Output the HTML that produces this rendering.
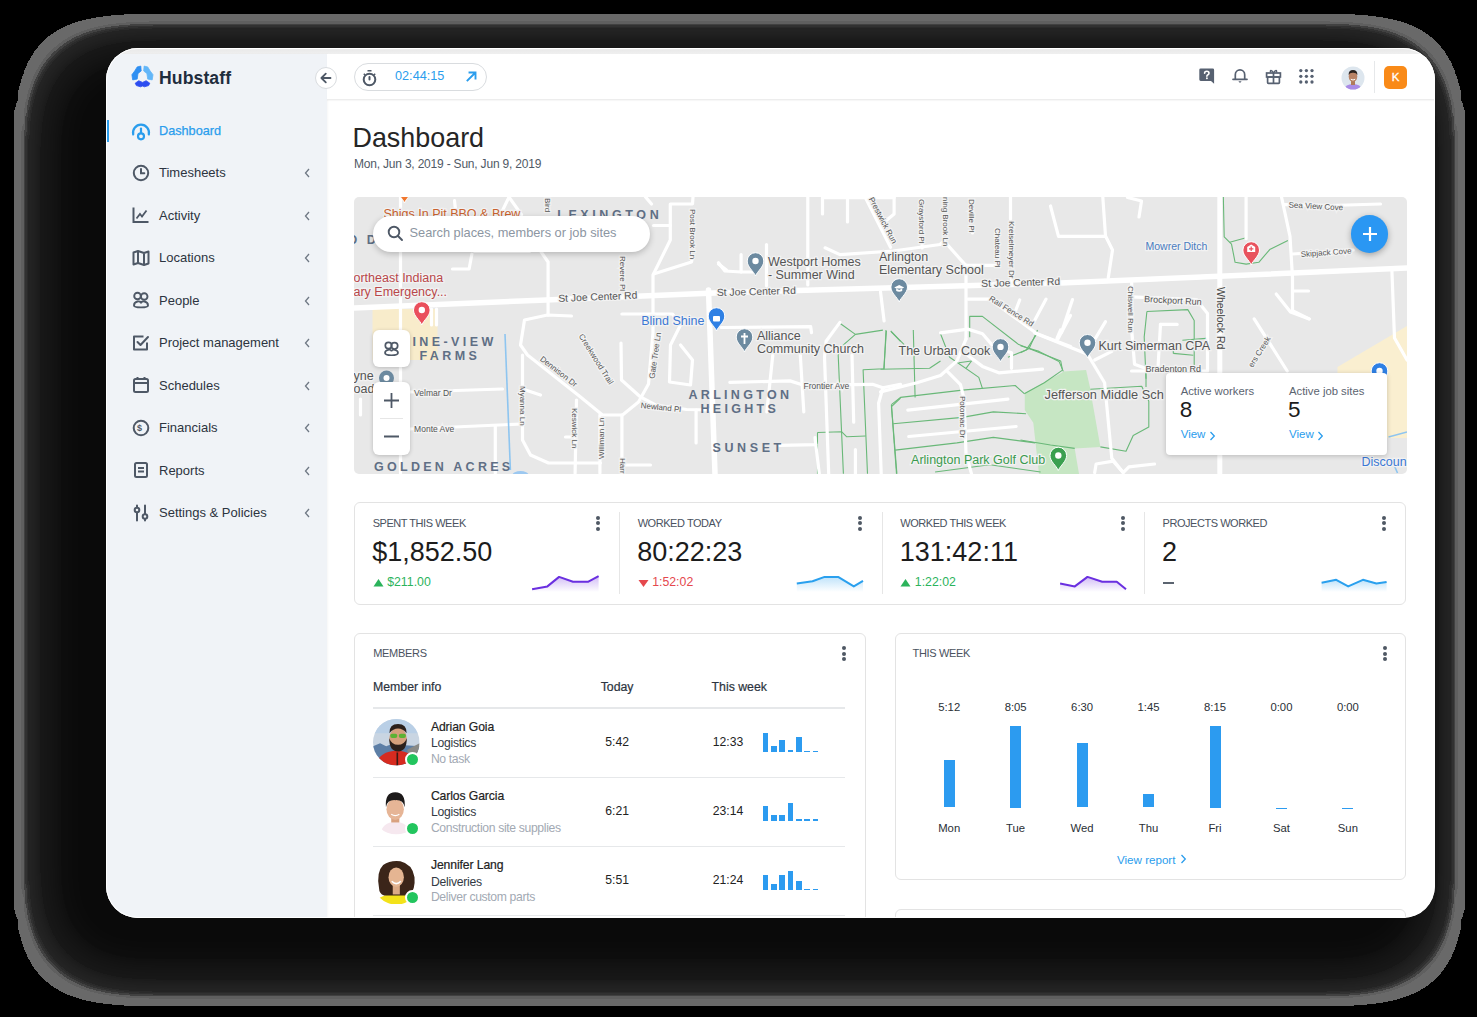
<!DOCTYPE html>
<html><head><meta charset="utf-8">
<style>
*{box-sizing:border-box;margin:0;padding:0}
html,body{width:1477px;height:1017px;overflow:hidden;background:#000}
body{font-family:"Liberation Sans",sans-serif;position:relative;color:#222}
.a{position:absolute}
.t{position:absolute;white-space:nowrap;line-height:1}
#win{position:absolute;left:106px;top:48px;width:1329px;height:870px;border-radius:32px;overflow:hidden;background:#fff}
#abs{position:absolute;left:-106px;top:-48px;width:1477px;height:1017px}
#topstrip{position:absolute;left:106px;top:48px;width:1329px;height:6px;background:linear-gradient(#e8e8e8,#efefef)}
#side{position:absolute;left:106px;top:54px;width:221px;height:864px;background:#f0f3f7;box-shadow:1px 0 2px rgba(0,0,0,.035)}
#hdr{position:absolute;left:327px;top:54px;width:1108px;height:46px;background:#fff;border-bottom:1px solid #ededed;box-shadow:0 1px 1px rgba(0,0,0,.03)}
.mi{position:absolute;left:159px;font-size:13px;color:#2c3440;white-space:nowrap;line-height:1}
.chev{position:absolute;left:303px;width:8px;height:10px}
.ic{position:absolute;left:131px;width:20px;height:20px}
.card{position:absolute;background:#fff;border:1px solid #e3e3e3;border-radius:6px}
.lbl{position:absolute;font-size:11px;color:#4a5260;white-space:nowrap;line-height:1;letter-spacing:0}
.big{position:absolute;font-size:27px;color:#1c1c1c;white-space:nowrap;line-height:1}
.keb{position:absolute;width:4px;height:15px}
.keb i{position:absolute;left:0;width:4px;height:4px;border-radius:2px;background:#4f5864}
</style></head>
<body>
<svg width="0" height="0" style="position:absolute"><defs>
<clipPath id="avc"><circle cx="23" cy="23" r="23"/></clipPath>
<symbol id="av-adrian" viewBox="0 0 46 46"><g clip-path="url(#avc)">
 <rect width="46" height="46" fill="#c9d5e2"/><rect y="0" width="46" height="14" fill="#b9cfe6"/>
 <path d="M0 27 L7 24 L13 27 L18 25 L46 27 V46 H0Z" fill="#5d7fa6"/><path d="M34 30 L46 24 V46 H34Z" fill="#8a8a86"/>
 <path d="M3 46 Q5 32 24 31 Q40 32 43 46Z" fill="#d62b20"/><path d="M24 33 V46" stroke="#3a1a14" stroke-width="1.6"/>
 <ellipse cx="24.7" cy="19" rx="8.6" ry="10.5" fill="#d4a07c"/>
 <path d="M16 19 Q16 32 24.7 32 Q33.4 32 33.4 19 Q31 25.5 24.7 25.5 Q18.4 25.5 16 19Z" fill="#2b201b"/>
 <path d="M16.2 14 Q16 5 24.7 5 Q33.4 5 33.2 14 Q29.5 9.5 24.7 9.5 Q19.9 9.5 16.2 14Z" fill="#2b201b"/>
 <rect x="17" y="14.5" width="7" height="4.3" rx="2" fill="#5bb234"/><rect x="25.5" y="14.5" width="7" height="4.3" rx="2" fill="#5bb234"/>
</g></symbol>
<symbol id="av-carlos" viewBox="0 0 46 46"><g clip-path="url(#avc)">
 <rect width="46" height="46" fill="#fff"/>
 <path d="M7 46 Q9 34 22 33 Q35 34 37 46Z" fill="#f6e8ef"/>
 <rect x="18" y="27" width="8" height="7" fill="#d9a17f"/>
 <ellipse cx="21.9" cy="21" rx="8.6" ry="10.6" fill="#e6b596"/>
 <path d="M12.8 19 Q11.5 4.3 22 4.3 Q32.5 4.3 31.2 19 Q30 11.5 22 12 Q14 11.5 12.8 19Z" fill="#1d1a1a"/>
 <path d="M18 26 Q22 28.5 26 26" stroke="#fff" stroke-width="1.2" fill="none"/>
</g></symbol>
<symbol id="av-jen" viewBox="0 0 46 46"><g clip-path="url(#avc)">
 <rect width="46" height="46" fill="#fff"/>
 <path d="M2 46 Q4 36 23 35 Q40 36 43 46Z" fill="#f3e21a"/>
 <path d="M6 30 Q3 14 10 7 Q17 2 27 3.2 Q39 6 41 19 Q42 31 36 37 L11 37 Q6 35 6 30Z" fill="#3b2519"/>
 <rect x="19.5" y="26" width="7" height="10" fill="#dcaa86"/>
 <ellipse cx="22.9" cy="19" rx="7.6" ry="9.6" fill="#e5b592"/>
 <path d="M18.5 23 Q23 27.5 27.5 23" stroke="#fff" stroke-width="1.6" fill="none"/>
</g></symbol>
</defs></svg>
<svg id="shadow" width="1477" height="1017" style="position:absolute;left:0;top:0">
<defs><filter id="shf" filterUnits="userSpaceOnUse" x="0" y="0" width="1477" height="1017" color-interpolation-filters="sRGB">
<feGaussianBlur stdDeviation="25.6"/>
<feColorMatrix type="matrix" values="0 0 0 1 0  0 0 0 1 0  0 0 0 1 0  0 0 0 0 1"/>
<feComponentTransfer><feFuncR type="discrete" tableValues="0 0.412 0.412 0.373 0.255 0.196 0.165 0.141 0.138 0.136 0.133 0.13 0.128 0.125 0.122 0.119 0.117 0.114 0.111 0.109 0.106 0.094 0.094 0.093 0.092 0.092 0.091 0.09 0.09 0.089 0.089 0.088 0.087 0.087 0.086 0.086 0.085 0.084 0.084 0.083 0.082 0.082 0.081 0.081 0.08 0.079 0.079 0.078 0.078 0.077 0.076 0.076 0.075 0.074 0.074 0.073 0.073 0.072 0.071 0.071 0.07 0.07 0.069 0.068 0.068 0.067 0.066 0.066 0.065 0.065 0.064 0.063 0.063 0.055 0.055 0.055 0.054 0.054 0.054 0.054 0.054 0.053 0.053 0.053 0.053 0.053 0.053 0.052 0.052 0.052 0.052 0.052 0.052 0.051 0.051 0.051 0.051 0.051 0.051 0.05 0.05 0.05 0.05 0.05 0.049 0.049 0.049 0.049 0.049 0.049 0.048 0.048 0.048 0.048 0.048 0.048 0.047 0.047 0.047 0.047 0.047 0.046 0.046 0.046 0.046 0.046 0.046 0.045 0.045 0.045 0.045 0.045 0.045 0.044 0.044 0.044 0.044 0.044 0.043 0.043 0.043 0.043 0.043 0.043 0.043 0.043 0.043 0.043 0.043 0.043 0.043 0.043 0.043 0.043 0.043 0.043 0.043 0.043 0.043 0.043 0.043 0.043 0.043 0.043 0.043 0.043 0.043 0.043 0.043 0.043 0.043 0.043 0.043 0.043 0.043 0.043 0.043 0.043 0.043 0.043 0.043 0.043 0.043 0.043 0.043 0.043 0.043 0.043 0.043 0.043 0.043 0.043 0.043 0.043 0.043 0.043 0.043 0.043 0.043 0.043 0.043 0.043 0.043 0.043 0.043 0.043 0.043 0.043 0.043 0.043 0.043 0.043 0.043 0.043 0.043 0.043 0.043 0.043 0.043 0.043 0.043 0.043 0.043 0.043 0.043 0.043 0.043 0.043 0.043 0.043 0.043 0.043 0.043 0.043 0.043 0.043 0.043 0.043 0.043 0.043 0.043 0.043 0.043 0.043 0.043 0.043 0.043 0.043 0.043 0.043 0.043 0.043 0.043 0.043 0.043 0.043"/><feFuncG type="discrete" tableValues="0 0.412 0.412 0.373 0.255 0.196 0.165 0.141 0.138 0.136 0.133 0.13 0.128 0.125 0.122 0.119 0.117 0.114 0.111 0.109 0.106 0.094 0.094 0.093 0.092 0.092 0.091 0.09 0.09 0.089 0.089 0.088 0.087 0.087 0.086 0.086 0.085 0.084 0.084 0.083 0.082 0.082 0.081 0.081 0.08 0.079 0.079 0.078 0.078 0.077 0.076 0.076 0.075 0.074 0.074 0.073 0.073 0.072 0.071 0.071 0.07 0.07 0.069 0.068 0.068 0.067 0.066 0.066 0.065 0.065 0.064 0.063 0.063 0.055 0.055 0.055 0.054 0.054 0.054 0.054 0.054 0.053 0.053 0.053 0.053 0.053 0.053 0.052 0.052 0.052 0.052 0.052 0.052 0.051 0.051 0.051 0.051 0.051 0.051 0.05 0.05 0.05 0.05 0.05 0.049 0.049 0.049 0.049 0.049 0.049 0.048 0.048 0.048 0.048 0.048 0.048 0.047 0.047 0.047 0.047 0.047 0.046 0.046 0.046 0.046 0.046 0.046 0.045 0.045 0.045 0.045 0.045 0.045 0.044 0.044 0.044 0.044 0.044 0.043 0.043 0.043 0.043 0.043 0.043 0.043 0.043 0.043 0.043 0.043 0.043 0.043 0.043 0.043 0.043 0.043 0.043 0.043 0.043 0.043 0.043 0.043 0.043 0.043 0.043 0.043 0.043 0.043 0.043 0.043 0.043 0.043 0.043 0.043 0.043 0.043 0.043 0.043 0.043 0.043 0.043 0.043 0.043 0.043 0.043 0.043 0.043 0.043 0.043 0.043 0.043 0.043 0.043 0.043 0.043 0.043 0.043 0.043 0.043 0.043 0.043 0.043 0.043 0.043 0.043 0.043 0.043 0.043 0.043 0.043 0.043 0.043 0.043 0.043 0.043 0.043 0.043 0.043 0.043 0.043 0.043 0.043 0.043 0.043 0.043 0.043 0.043 0.043 0.043 0.043 0.043 0.043 0.043 0.043 0.043 0.043 0.043 0.043 0.043 0.043 0.043 0.043 0.043 0.043 0.043 0.043 0.043 0.043 0.043 0.043 0.043 0.043 0.043 0.043 0.043 0.043 0.043"/><feFuncB type="discrete" tableValues="0 0.412 0.412 0.373 0.255 0.196 0.165 0.141 0.138 0.136 0.133 0.13 0.128 0.125 0.122 0.119 0.117 0.114 0.111 0.109 0.106 0.094 0.094 0.093 0.092 0.092 0.091 0.09 0.09 0.089 0.089 0.088 0.087 0.087 0.086 0.086 0.085 0.084 0.084 0.083 0.082 0.082 0.081 0.081 0.08 0.079 0.079 0.078 0.078 0.077 0.076 0.076 0.075 0.074 0.074 0.073 0.073 0.072 0.071 0.071 0.07 0.07 0.069 0.068 0.068 0.067 0.066 0.066 0.065 0.065 0.064 0.063 0.063 0.055 0.055 0.055 0.054 0.054 0.054 0.054 0.054 0.053 0.053 0.053 0.053 0.053 0.053 0.052 0.052 0.052 0.052 0.052 0.052 0.051 0.051 0.051 0.051 0.051 0.051 0.05 0.05 0.05 0.05 0.05 0.049 0.049 0.049 0.049 0.049 0.049 0.048 0.048 0.048 0.048 0.048 0.048 0.047 0.047 0.047 0.047 0.047 0.046 0.046 0.046 0.046 0.046 0.046 0.045 0.045 0.045 0.045 0.045 0.045 0.044 0.044 0.044 0.044 0.044 0.043 0.043 0.043 0.043 0.043 0.043 0.043 0.043 0.043 0.043 0.043 0.043 0.043 0.043 0.043 0.043 0.043 0.043 0.043 0.043 0.043 0.043 0.043 0.043 0.043 0.043 0.043 0.043 0.043 0.043 0.043 0.043 0.043 0.043 0.043 0.043 0.043 0.043 0.043 0.043 0.043 0.043 0.043 0.043 0.043 0.043 0.043 0.043 0.043 0.043 0.043 0.043 0.043 0.043 0.043 0.043 0.043 0.043 0.043 0.043 0.043 0.043 0.043 0.043 0.043 0.043 0.043 0.043 0.043 0.043 0.043 0.043 0.043 0.043 0.043 0.043 0.043 0.043 0.043 0.043 0.043 0.043 0.043 0.043 0.043 0.043 0.043 0.043 0.043 0.043 0.043 0.043 0.043 0.043 0.043 0.043 0.043 0.043 0.043 0.043 0.043 0.043 0.043 0.043 0.043 0.043 0.043 0.043 0.043 0.043 0.043 0.043 0.043 0.043 0.043 0.043 0.043 0.043"/></feComponentTransfer>
</filter></defs>
<rect x="75" y="75" width="1329" height="870" rx="44" fill="#fff" filter="url(#shf)"/>
</svg>
<div id="win"><div id="abs">
  <div id="topstrip"></div>
  <div id="side"></div>

  <!-- logo -->
  <svg class="a" style="left:131px;top:65px" width="23" height="23" viewBox="0 0 23 23" stroke-linejoin="round" stroke-width="0.8">
    <path d="M6.2 1.9 L9.8 1.1 L10.2 6.0 L7.0 8.4 L6.2 14.1 L1.7 14.9 L0.9 9.7 L3.7 6.0Z" fill="#2f8ff2" stroke="#2f8ff2"/>
    <path d="M16.7 1.9 L13.1 1.1 L12.7 6.0 L15.9 8.4 L16.7 14.1 L21.2 14.9 L22.0 9.7 L19.2 6.0Z" fill="#62b6f8" stroke="#62b6f8"/>
    <path d="M4.2 18.2 L7.8 15.7 L11.5 17.4 L15.1 15.7 L18.8 18.2 L17.6 20.6 L13.5 21.8 L11.5 21.0 L9.5 21.8 L5.4 20.6Z" fill="#2c4df0" stroke="#2c4df0"/>
  </svg>
  <div class="t" style="left:159px;top:69.5px;font-size:17.6px;font-weight:bold;color:#1f2d3d;letter-spacing:0.1px">Hubstaff</div>
  <!-- active bar -->
  <div class="a" style="left:106px;top:120px;width:2.5px;height:22px;background:#2a9ded"></div>
  <!-- icons -->
  <svg class="a" style="left:130px;top:120px" width="22" height="22" viewBox="0 0 22 22" fill="none" stroke="#2a9ded" stroke-width="2.2" stroke-linecap="round">
    <path d="M3.2 14.5 A8 8 0 1 1 18.8 14.5"/><line x1="11" y1="8.5" x2="11" y2="13"/><circle cx="11" cy="16.3" r="3"/>
  </svg>
  <div class="mi" style="top:125px;color:#2a9ded;font-size:12.7px;-webkit-text-stroke:0.25px #2a9ded">Dashboard</div>

  <svg class="a" style="left:131px;top:163px" width="20" height="20" viewBox="0 0 20 20" fill="none" stroke="#4e5866" stroke-width="2">
    <circle cx="10" cy="10" r="7.2"/><path d="M10 6 V10.3 H13.3" stroke-linecap="round"/>
  </svg>
  <div class="mi" style="top:166px">Timesheets</div>

  <svg class="a" style="left:131px;top:205px" width="20" height="20" viewBox="0 0 20 20" fill="none" stroke="#4e5866" stroke-width="2">
    <path d="M2.5 2.5 V17 H17.5"/><path d="M5.5 13.5 L9 9 L11 11.5 L15.5 5.5" stroke-width="1.8"/>
  </svg>
  <div class="mi" style="top:208.5px">Activity</div>

  <svg class="a" style="left:131px;top:248px" width="20" height="20" viewBox="0 0 20 20" fill="none" stroke="#4e5866" stroke-width="2" stroke-linejoin="round">
    <path d="M2.5 4.5 L7 3 L13 5 L17.5 3.5 V15.5 L13 17 L7 15 L2.5 16.5 Z M7 3 V15 M13 5 V17"/>
  </svg>
  <div class="mi" style="top:251px">Locations</div>

  <svg class="a" style="left:131px;top:290px" width="20" height="20" viewBox="0 0 20 20" fill="none" stroke="#4e5866" stroke-width="1.9">
    <circle cx="6.5" cy="6" r="3.3"/><circle cx="13.2" cy="6.5" r="3.3"/><path d="M3 15.5 C3 11 10 10 10 13.5 C10 10 17 11 17 15.5 C17 18 3 18 3 15.5 Z"/>
  </svg>
  <div class="mi" style="top:293.5px">People</div>

  <svg class="a" style="left:131px;top:333px" width="20" height="20" viewBox="0 0 20 20" fill="none" stroke="#4e5866" stroke-width="2" stroke-linejoin="round">
    <path d="M16 9.5 V16.5 H3 V3.5 H12.5"/><path d="M6.5 9 L9.5 12 L17 4" stroke-linecap="round"/>
  </svg>
  <div class="mi" style="top:336px">Project management</div>

  <svg class="a" style="left:131px;top:375px" width="20" height="20" viewBox="0 0 20 20" fill="none" stroke="#4e5866" stroke-width="2">
    <rect x="3" y="4" width="14" height="13" rx="1.5"/><path d="M3 8 H17 M6.5 2 V5 M13.5 2 V5"/>
  </svg>
  <div class="mi" style="top:378.5px">Schedules</div>

  <svg class="a" style="left:131px;top:418px" width="20" height="20" viewBox="0 0 20 20" fill="none" stroke="#4e5866" stroke-width="2">
    <circle cx="10" cy="10" r="7.3"/>
  </svg>
  <div class="t" style="left:137px;top:424px;font-size:9px;font-weight:bold;color:#4e5866">$</div>
  <div class="mi" style="top:421px">Financials</div>

  <svg class="a" style="left:131px;top:460px" width="20" height="20" viewBox="0 0 20 20" fill="none" stroke="#4e5866" stroke-width="2">
    <rect x="4" y="3" width="12" height="14" rx="1.5"/><path d="M7 8 H13 M7 11.5 H13"/>
  </svg>
  <div class="mi" style="top:463.5px">Reports</div>

  <svg class="a" style="left:131px;top:503px" width="20" height="20" viewBox="0 0 20 20" fill="none" stroke="#4e5866" stroke-width="2" stroke-linecap="round">
    <path d="M6 2.5 V17.5 M14 2.5 V17.5"/><circle cx="6" cy="7" r="2.3" fill="#f0f3f7"/><circle cx="14" cy="13.5" r="2.3" fill="#f0f3f7"/>
  </svg>
  <div class="mi" style="top:506px">Settings &amp; Policies</div>
<svg class="chev" style="top:168px" viewBox="0 0 8 10"><path d="M6 1 L2.5 5 L6 9" fill="none" stroke="#6f7884" stroke-width="1.3"/></svg>
<svg class="chev" style="top:210.5px" viewBox="0 0 8 10"><path d="M6 1 L2.5 5 L6 9" fill="none" stroke="#6f7884" stroke-width="1.3"/></svg>
<svg class="chev" style="top:253px" viewBox="0 0 8 10"><path d="M6 1 L2.5 5 L6 9" fill="none" stroke="#6f7884" stroke-width="1.3"/></svg>
<svg class="chev" style="top:295.5px" viewBox="0 0 8 10"><path d="M6 1 L2.5 5 L6 9" fill="none" stroke="#6f7884" stroke-width="1.3"/></svg>
<svg class="chev" style="top:338px" viewBox="0 0 8 10"><path d="M6 1 L2.5 5 L6 9" fill="none" stroke="#6f7884" stroke-width="1.3"/></svg>
<svg class="chev" style="top:380.5px" viewBox="0 0 8 10"><path d="M6 1 L2.5 5 L6 9" fill="none" stroke="#6f7884" stroke-width="1.3"/></svg>
<svg class="chev" style="top:423px" viewBox="0 0 8 10"><path d="M6 1 L2.5 5 L6 9" fill="none" stroke="#6f7884" stroke-width="1.3"/></svg>
<svg class="chev" style="top:465.5px" viewBox="0 0 8 10"><path d="M6 1 L2.5 5 L6 9" fill="none" stroke="#6f7884" stroke-width="1.3"/></svg>
<svg class="chev" style="top:508px" viewBox="0 0 8 10"><path d="M6 1 L2.5 5 L6 9" fill="none" stroke="#6f7884" stroke-width="1.3"/></svg>

  <div id="hdr"></div>

  <!-- back button -->
  <div class="a" style="left:315px;top:66.5px;width:22px;height:22px;border-radius:11px;background:#fff;border:1px solid #d9dcdf"></div>
  <svg class="a" style="left:319px;top:70.5px" width="14" height="14" viewBox="0 0 14 14" fill="none" stroke="#4e5866" stroke-width="1.8" stroke-linecap="round" stroke-linejoin="round">
    <path d="M11.5 7 H2.5 M6.8 2.6 L2.4 7 L6.8 11.4"/>
  </svg>
  <!-- timer pill -->
  <div class="a" style="left:354px;top:63px;width:133px;height:28px;border-radius:14px;border:1px solid #d9dcdf;background:#fff"></div>
  <svg class="a" style="left:361px;top:68.5px" width="17" height="18" viewBox="0 0 17 18" fill="none" stroke="#4e5866" stroke-width="2">
    <circle cx="8.5" cy="10.5" r="5.8"/><path d="M6.5 1.8 H10.5" stroke-width="1.6"/><path d="M8.5 8 V10.5" stroke-linecap="round"/><path d="M2.8 4.8 L4 6 M14.2 4.8 L13 6" stroke-width="1.5"/>
  </svg>
  <div class="t" style="left:395px;top:69.5px;font-size:12.7px;color:#2a9ded">02:44:15</div>
  <svg class="a" style="left:465px;top:70px" width="13" height="13" viewBox="0 0 13 13" fill="none" stroke="#2a9ded" stroke-width="1.9" stroke-linecap="square">
    <path d="M2.5 10.5 L10 3 M4.5 2.5 H10.5 V8.5"/>
  </svg>
  <!-- right icons -->
  <svg class="a" style="left:1199px;top:68px" width="16" height="16" viewBox="0 0 16 16">
    <path d="M0.3 1.8 Q0.3 0.4 1.7 0.4 H13.7 Q15.1 0.4 15.1 1.8 V15.8 L12 13 H1.7 Q0.3 13 0.3 11.6 Z" fill="#576171"/>
    <path d="M5.6 5.3 Q5.6 3.3 7.8 3.3 Q10 3.3 10 5.2 Q10 6.4 8.6 7 Q7.9 7.3 7.9 8.3" stroke="#fff" stroke-width="1.6" fill="none" stroke-linecap="round"/><circle cx="7.9" cy="10.3" r="0.95" fill="#fff"/>
  </svg>
  <svg class="a" style="left:1232px;top:67.5px" width="16" height="17" viewBox="0 0 16 17" fill="none" stroke="#576171" stroke-width="1.7">
    <path d="M3.3 11.3 V6.8 A4.7 4.9 0 0 1 12.7 6.8 V11.3"/><path d="M1 11.3 H15" stroke-linecap="round"/><path d="M6.4 13.2 H9.6 L8 15 Z" fill="#576171" stroke="none"/>
  </svg>
  <svg class="a" style="left:1265px;top:67.5px" width="17" height="17" viewBox="0 0 17 17" fill="none" stroke="#576171" stroke-width="1.7">
    <rect x="1.6" y="5" width="13.8" height="4"/><rect x="2.6" y="9" width="11.8" height="6.3" rx="0.8"/><path d="M8.5 5 V15.3"/><path d="M8.5 4.8 C6.5 1.5 4.8 2 5.6 4.5 M8.5 4.8 C10.5 1.5 12.2 2 11.4 4.5" stroke-width="1.4"/>
  </svg>
  <svg class="a" style="left:1298px;top:67.5px" width="17" height="17" viewBox="0 0 17 17" fill="#576171">
    <circle cx="2.8" cy="2.6" r="1.65"/><circle cx="8.4" cy="2.6" r="1.65"/><circle cx="14" cy="2.6" r="1.65"/>
    <circle cx="2.8" cy="8.3" r="1.65"/><circle cx="8.4" cy="8.3" r="1.65"/><circle cx="14" cy="8.3" r="1.65"/>
    <circle cx="2.8" cy="14" r="1.65"/><circle cx="8.4" cy="14" r="1.65"/><circle cx="14" cy="14" r="1.65"/>
  </svg>
  <!-- avatar -->
  <svg class="a" style="left:1341px;top:66px" width="24" height="24" viewBox="0 0 24 24">
    <defs><clipPath id="av"><circle cx="12" cy="12" r="11.5"/></clipPath></defs>
    <g clip-path="url(#av)">
      <rect width="24" height="24" fill="#dde6ee"/>
      <path d="M3 24 Q4 18 12 18 Q20 18 21 24 Z" fill="#a98be6"/>
      <rect x="10" y="14" width="4" height="5" fill="#b07a5a"/>
      <ellipse cx="12" cy="10.5" rx="4.3" ry="5.3" fill="#b98366"/>
      <path d="M7.6 9 Q7.5 4 12 4 Q16.5 4 16.4 9 Q15 6.5 12 6.8 Q9 6.5 7.6 9 Z" fill="#2a221f"/>
      <path d="M9.8 13.2 Q12 14.8 14.2 13.2" stroke="#fff" stroke-width="1" fill="none"/>
    </g>
  </svg>
  <div class="a" style="left:1374px;top:61px;width:1px;height:32px;background:#e6e8ea"></div>
  <div class="a" style="left:1384px;top:65.5px;width:23px;height:23px;border-radius:5px;background:#f98a18"></div>
  <div class="t" style="left:1384px;top:71.5px;width:23px;text-align:center;font-size:11.5px;color:#fff;-webkit-text-stroke:0.3px #fff">K</div>


  <!-- title -->
  <div class="t" style="left:352.5px;top:125px;font-size:26.9px;color:#262626">Dashboard</div>
  <div class="t" style="left:354px;top:157.5px;font-size:12px;letter-spacing:-0.2px;color:#505a66">Mon, Jun 3, 2019 - Sun, Jun 9, 2019</div>
  <!-- MAP -->
  <div id="map" class="a" style="left:353.5px;top:197px;width:1053px;height:277px;border-radius:5px;overflow:hidden;background:#e8e8e8">
<!--MAPSVG-->
<svg width="1053" height="277" viewBox="353.5 197 1053 277" style="position:absolute;left:0;top:0;font-family:'Liberation Sans'">
<path d="M1024.3 392.7 L1042.8 382.8 L1061.4 372.8 L1062.8 371.4 L1085.6 369.9 L1089.9 389.2 L1091.3 398.4 L1099.9 446.9 L1074.2 448.4 L1078.5 474.0 L1038.5 474.0 L1032.8 422.7 L1024.3 409.9 Z" fill="#c6e6c3"/>
<path d="M1337.0 367.0 L1406.5 326.0 L1406.5 438.0 L1337.0 438.0 Z" fill="#faefd0"/>
<path d="M372.0 309.0 L437.0 309.0 L437.0 360.0 L372.0 360.0 Z" fill="#f8eccb"/>
<path d="M839.4 323.2 L854.9 334.4 L882.4 330.1" fill="none" stroke="#69b878" stroke-width="1.1" stroke-linejoin="round"/>
<path d="M854.9 334.4 L842.9 344.8 L837.7 355.0 L842.9 473.8" fill="none" stroke="#69b878" stroke-width="1.1" stroke-linejoin="round"/>
<path d="M885.9 331.0 L883.3 368.8 L862.6 369.7 L867.0 473.8" fill="none" stroke="#69b878" stroke-width="1.1" stroke-linejoin="round"/>
<path d="M817.0 432.5 L841.0 431.7 L846.3 436.8 L865.2 436.0" fill="none" stroke="#69b878" stroke-width="1.1" stroke-linejoin="round"/>
<path d="M817.0 432.5 L817.0 473.8" fill="none" stroke="#69b878" stroke-width="1.1" stroke-linejoin="round"/>
<path d="M890.2 331.0 L900.0 341.3" fill="none" stroke="#69b878" stroke-width="1.1" stroke-linejoin="round"/>
<path d="M891.0 406.7 L900.0 398.0" fill="none" stroke="#69b878" stroke-width="1.1" stroke-linejoin="round"/>
<path d="M891.0 406.7 L896.0 473.8" fill="none" stroke="#69b878" stroke-width="1.1" stroke-linejoin="round"/>
<path d="M969.2 337.3 L969.2 316.4 L981.9 316.4 L1018.3 344.6 L1060.2 361.0 L1062.0 370.1 L1043.8 382.8 L1023.8 393.7" fill="none" stroke="#69b878" stroke-width="1.1" stroke-linejoin="round"/>
<path d="M1036.5 333.7 L1025.6 350.1 L1007.4 357.3" fill="none" stroke="#69b878" stroke-width="1.1" stroke-linejoin="round"/>
<path d="M880.0 369.2 L929.1 368.3 L940.0 361.0" fill="none" stroke="#69b878" stroke-width="1.1" stroke-linejoin="round"/>
<path d="M885.5 330.0 L883.6 369.2" fill="none" stroke="#69b878" stroke-width="1.1" stroke-linejoin="round"/>
<path d="M890.9 331.9 L903.7 344.6" fill="none" stroke="#69b878" stroke-width="1.1" stroke-linejoin="round"/>
<path d="M912.8 330.0 L914.6 397.4" fill="none" stroke="#69b878" stroke-width="1.1" stroke-linejoin="round"/>
<path d="M940.0 333.7 L949.2 357.3 L978.3 377.4 L981.9 388.3" fill="none" stroke="#69b878" stroke-width="1.1" stroke-linejoin="round"/>
<path d="M958.3 362.8 L971.0 361.0" fill="none" stroke="#69b878" stroke-width="1.1" stroke-linejoin="round"/>
<path d="M965.5 368.3 L971.0 361.0" fill="none" stroke="#69b878" stroke-width="1.1" stroke-linejoin="round"/>
<path d="M890.9 404.6 L900.0 397.4 L961.9 390.1 L1014.7 385.5 L1023.8 393.7" fill="none" stroke="#69b878" stroke-width="1.1" stroke-linejoin="round"/>
<path d="M890.9 404.6 L896.4 473.8" fill="none" stroke="#69b878" stroke-width="1.1" stroke-linejoin="round"/>
<path d="M892.7 423.8 L961.9 417.4 L992.8 411.9 L1025.6 413.7" fill="none" stroke="#69b878" stroke-width="1.1" stroke-linejoin="round"/>
<path d="M894.6 450.1 L956.4 442.9 L992.8 437.4 L1034.7 442.9" fill="none" stroke="#69b878" stroke-width="1.1" stroke-linejoin="round"/>
<path d="M934.6 472.0 L989.2 464.7 L1040.1 472.0" fill="none" stroke="#69b878" stroke-width="1.1" stroke-linejoin="round"/>
<path d="M1222.8 195.0 L1223.7 236.8 L1231.0 244.1 L1234.6 262.3 L1245.6 264.1 L1258.3 262.3 L1269.2 249.6 L1287.4 240.5" fill="none" stroke="#69b878" stroke-width="1.1" stroke-linejoin="round"/>
<path d="M1229.2 242.3 L1245.6 237.8" fill="none" stroke="#69b878" stroke-width="1.1" stroke-linejoin="round"/>
<path d="M1146.4 311.5 L1187.3 309.6 L1193.7 320.5 L1193.7 376.9" fill="none" stroke="#69b878" stroke-width="1.1" stroke-linejoin="round"/>
<path d="M1146.4 311.5 L1143.7 336.9 L1145.5 378.7" fill="none" stroke="#69b878" stroke-width="1.1" stroke-linejoin="round"/>
<path d="M1172.8 353.4 L1192.8 355.2" fill="none" stroke="#69b878" stroke-width="1.1" stroke-linejoin="round"/>
<path d="M1181.9 340.2 L1205.5 338.4" fill="none" stroke="#69b878" stroke-width="1.1" stroke-linejoin="round"/>
<path d="M1172.8 353.4 L1172.8 348.0" fill="none" stroke="#69b878" stroke-width="1.1" stroke-linejoin="round"/>
<path d="M1020.0 345.7 L1038.5 351.4 L1058.5 361.4 L1062.8 371.4" fill="none" stroke="#69b878" stroke-width="1.1" stroke-linejoin="round"/>
<path d="M1037.0 330.0 L1028.6 348.5 L1020.0 352.8" fill="none" stroke="#69b878" stroke-width="1.1" stroke-linejoin="round"/>
<path d="M1089.9 389.2 L1141.2 386.3 L1148.3 401.3 L1148.3 427.0 L1132.7 435.5 L1125.5 451.2 L1099.9 446.9" fill="none" stroke="#69b878" stroke-width="1.1" stroke-linejoin="round"/>
<path d="M1145.5 365.6 L1145.5 387.0" fill="none" stroke="#69b878" stroke-width="1.1" stroke-linejoin="round"/>
<path d="M1074.2 448.4 L1050.0 445.0 L1020.0 440.0" fill="none" stroke="#69b878" stroke-width="1.1" stroke-linejoin="round"/>
<path d="M400.0 197.0 L400.0 473.0" fill="none" stroke="#ffffff" stroke-width="3.2" stroke-linejoin="round" stroke-linecap="round"/>
<path d="M360.0 399.0 L360.0 415.0" fill="none" stroke="#ffffff" stroke-width="3.2" stroke-linejoin="round" stroke-linecap="round"/>
<path d="M540.7 252.0 L547.6 262.0 L547.6 315.0" fill="none" stroke="#ffffff" stroke-width="3.2" stroke-linejoin="round" stroke-linecap="round"/>
<path d="M500.0 214.6 L508.5 197.1 L521.0 214.6" fill="none" stroke="#ffffff" stroke-width="3.2" stroke-linejoin="round" stroke-linecap="round"/>
<path d="M454.0 200.6 L455.0 210.0" fill="none" stroke="#ffffff" stroke-width="3.2" stroke-linejoin="round" stroke-linecap="round"/>
<path d="M571.0 316.0 L547.0 315.0 L524.0 320.0 L520.0 345.0 L527.0 355.0 L578.8 396.0 L602.0 415.0 L622.0 415.0 L638.0 402.0 L648.0 384.0 L652.5 333.0 L652.5 275.0 L669.8 240.0 L669.8 204.0 L692.0 204.0 L692.5 197.0" fill="none" stroke="#ffffff" stroke-width="3.2" stroke-linejoin="round" stroke-linecap="round"/>
<path d="M522.0 355.0 L522.0 440.0 L530.0 455.0 L548.0 463.0 L600.0 463.0" fill="none" stroke="#ffffff" stroke-width="3.2" stroke-linejoin="round" stroke-linecap="round"/>
<path d="M620.5 343.0 L621.0 380.0 L640.0 397.0 L655.0 405.0 L686.0 409.5 L711.0 410.0" fill="none" stroke="#ffffff" stroke-width="3.2" stroke-linejoin="round" stroke-linecap="round"/>
<path d="M621.4 314.0 L672.0 314.0 L680.0 325.0 L670.0 345.0 L669.0 382.0 L690.0 385.0 L692.0 360.0 L680.0 345.0" fill="none" stroke="#ffffff" stroke-width="3.2" stroke-linejoin="round" stroke-linecap="round"/>
<path d="M695.6 410.0 L695.6 443.0" fill="none" stroke="#ffffff" stroke-width="3.2" stroke-linejoin="round" stroke-linecap="round"/>
<path d="M653.0 225.5 L669.8 225.5" fill="none" stroke="#ffffff" stroke-width="3.2" stroke-linejoin="round" stroke-linecap="round"/>
<path d="M653.0 274.0 L691.0 262.0 L692.0 257.0" fill="none" stroke="#ffffff" stroke-width="3.2" stroke-linejoin="round" stroke-linecap="round"/>
<path d="M651.0 204.0 L645.0 197.0" fill="none" stroke="#ffffff" stroke-width="3.2" stroke-linejoin="round" stroke-linecap="round"/>
<path d="M718.0 264.0 L726.0 270.0" fill="none" stroke="#ffffff" stroke-width="3.2" stroke-linejoin="round" stroke-linecap="round"/>
<path d="M525.0 390.0 L540.0 395.0" fill="none" stroke="#ffffff" stroke-width="3.2" stroke-linejoin="round" stroke-linecap="round"/>
<path d="M565.0 437.0 L575.0 437.0" fill="none" stroke="#ffffff" stroke-width="3.2" stroke-linejoin="round" stroke-linecap="round"/>
<path d="M625.0 465.0 L650.0 465.0" fill="none" stroke="#ffffff" stroke-width="3.2" stroke-linejoin="round" stroke-linecap="round"/>
<path d="M576.0 400.0 L574.6 473.0" fill="none" stroke="#ffffff" stroke-width="3.2" stroke-linejoin="round" stroke-linecap="round"/>
<path d="M720.7 327.5 L810.2 326.7 L811.0 332.7" fill="none" stroke="#ffffff" stroke-width="3.2" stroke-linejoin="round" stroke-linecap="round"/>
<path d="M839.4 322.4 L825.6 341.3 L824.0 356.8 L828.2 473.8" fill="none" stroke="#ffffff" stroke-width="3.2" stroke-linejoin="round" stroke-linecap="round"/>
<path d="M851.5 355.0 L853.2 422.2" fill="none" stroke="#ffffff" stroke-width="3.2" stroke-linejoin="round" stroke-linecap="round"/>
<path d="M729.3 382.3 L789.5 380.9 L803.3 385.2 L872.1 384.3 L882.4 387.8 L900.0 384.3" fill="none" stroke="#ffffff" stroke-width="3.2" stroke-linejoin="round" stroke-linecap="round"/>
<path d="M882.4 387.8 L878.1 403.3 L880.7 473.8" fill="none" stroke="#ffffff" stroke-width="3.2" stroke-linejoin="round" stroke-linecap="round"/>
<path d="M772.3 355.0 L766.3 411.9" fill="none" stroke="#ffffff" stroke-width="3.2" stroke-linejoin="round" stroke-linecap="round"/>
<path d="M799.8 355.0 L803.3 411.9" fill="none" stroke="#ffffff" stroke-width="3.2" stroke-linejoin="round" stroke-linecap="round"/>
<path d="M779.2 445.4 L815.3 444.6 L814.5 437.7" fill="none" stroke="#ffffff" stroke-width="3.2" stroke-linejoin="round" stroke-linecap="round"/>
<path d="M815.3 444.6 L818.8 473.8" fill="none" stroke="#ffffff" stroke-width="3.2" stroke-linejoin="round" stroke-linecap="round"/>
<path d="M854.9 449.7 L854.9 473.8" fill="none" stroke="#ffffff" stroke-width="3.2" stroke-linejoin="round" stroke-linecap="round"/>
<path d="M599.4 415.0 L599.4 473.0" fill="none" stroke="#ffffff" stroke-width="3.2" stroke-linejoin="round" stroke-linecap="round"/>
<path d="M621.4 415.0 L621.4 473.0" fill="none" stroke="#ffffff" stroke-width="3.2" stroke-linejoin="round" stroke-linecap="round"/>
<path d="M409.0 392.0 L502.0 389.0" fill="none" stroke="#ffffff" stroke-width="3.2" stroke-linejoin="round" stroke-linecap="round"/>
<path d="M409.0 429.0 L521.0 424.0" fill="none" stroke="#ffffff" stroke-width="3.2" stroke-linejoin="round" stroke-linecap="round"/>
<path d="M494.8 426.0 L494.8 473.0" fill="none" stroke="#ffffff" stroke-width="3.2" stroke-linejoin="round" stroke-linecap="round"/>
<path d="M452.0 269.0 L468.6 269.0 L471.4 254.0" fill="none" stroke="#ffffff" stroke-width="3.2" stroke-linejoin="round" stroke-linecap="round"/>
<path d="M474.0 251.4 L529.0 251.4" fill="none" stroke="#ffffff" stroke-width="3.2" stroke-linejoin="round" stroke-linecap="round"/>
<path d="M431.0 309.0 L431.0 325.0" fill="none" stroke="#ffffff" stroke-width="3.2" stroke-linejoin="round" stroke-linecap="round"/>
<path d="M436.0 309.0 L436.0 325.0" fill="none" stroke="#ffffff" stroke-width="3.2" stroke-linejoin="round" stroke-linecap="round"/>
<path d="M807.3 197.0 L807.3 285.0" fill="none" stroke="#ffffff" stroke-width="3.2" stroke-linejoin="round" stroke-linecap="round"/>
<path d="M943.6 241.0 L965.3 265.4 L997.8 265.4 L998.5 261.0" fill="none" stroke="#ffffff" stroke-width="3.2" stroke-linejoin="round" stroke-linecap="round"/>
<path d="M1010.0 197.0 L1010.0 219.0" fill="none" stroke="#ffffff" stroke-width="3.2" stroke-linejoin="round" stroke-linecap="round"/>
<path d="M1011.0 273.5 L1011.0 283.0" fill="none" stroke="#ffffff" stroke-width="3.2" stroke-linejoin="round" stroke-linecap="round"/>
<path d="M972.0 230.0 L972.0 233.0" fill="none" stroke="#ffffff" stroke-width="3.2" stroke-linejoin="round" stroke-linecap="round"/>
<path d="M824.6 247.8 L839.5 254.6 L892.7 251.0 L939.5 244.5 L943.6 241.0" fill="none" stroke="#ffffff" stroke-width="3.2" stroke-linejoin="round" stroke-linecap="round"/>
<path d="M865.0 197.8 L890.0 247.3" fill="none" stroke="#ffffff" stroke-width="3.2" stroke-linejoin="round" stroke-linecap="round"/>
<path d="M921.6 241.0 L921.6 248.0" fill="none" stroke="#ffffff" stroke-width="3.2" stroke-linejoin="round" stroke-linecap="round"/>
<path d="M718.0 262.7 L724.4 271.0 L740.6 272.0 L740.6 254.6" fill="none" stroke="#ffffff" stroke-width="3.2" stroke-linejoin="round" stroke-linecap="round"/>
<path d="M740.6 272.0 L754.0 272.0" fill="none" stroke="#ffffff" stroke-width="3.2" stroke-linejoin="round" stroke-linecap="round"/>
<path d="M822.0 214.0 L822.0 197.7 L893.6 197.7" fill="none" stroke="#ffffff" stroke-width="3.2" stroke-linejoin="round" stroke-linecap="round"/>
<path d="M847.0 197.0 L847.0 222.0" fill="none" stroke="#ffffff" stroke-width="3.2" stroke-linejoin="round" stroke-linecap="round"/>
<path d="M893.6 197.0 L893.6 214.0 L884.0 222.0" fill="none" stroke="#ffffff" stroke-width="3.2" stroke-linejoin="round" stroke-linecap="round"/>
<path d="M766.0 244.5 L766.0 285.8" fill="none" stroke="#ffffff" stroke-width="3.2" stroke-linejoin="round" stroke-linecap="round"/>
<path d="M965.5 265.0 L965.5 339.1" fill="none" stroke="#ffffff" stroke-width="3.2" stroke-linejoin="round" stroke-linecap="round"/>
<path d="M967.4 299.1 L989.2 299.1 L1036.5 333.7 L1070.0 346.4" fill="none" stroke="#ffffff" stroke-width="3.2" stroke-linejoin="round" stroke-linecap="round"/>
<path d="M1014.7 311.8 L1019.2 300.0" fill="none" stroke="#ffffff" stroke-width="3.2" stroke-linejoin="round" stroke-linecap="round"/>
<path d="M1032.9 322.8 L1045.6 299.1" fill="none" stroke="#ffffff" stroke-width="3.2" stroke-linejoin="round" stroke-linecap="round"/>
<path d="M1057.4 339.1 L1070.0 315.5" fill="none" stroke="#ffffff" stroke-width="3.2" stroke-linejoin="round" stroke-linecap="round"/>
<path d="M940.0 332.8 L967.4 329.1 L982.0 333.7 L992.8 346.4 L1011.0 352.8 L1011.0 368.3" fill="none" stroke="#ffffff" stroke-width="3.2" stroke-linejoin="round" stroke-linecap="round"/>
<path d="M967.4 355.5 L982.0 366.4 L998.3 372.8 L1042.0 369.2" fill="none" stroke="#ffffff" stroke-width="3.2" stroke-linejoin="round" stroke-linecap="round"/>
<path d="M880.0 391.9 L916.4 382.8 L940.0 375.5 L956.4 361.0 L965.5 339.1" fill="none" stroke="#ffffff" stroke-width="3.2" stroke-linejoin="round" stroke-linecap="round"/>
<path d="M947.3 371.9 L960.0 384.6 L963.7 399.2 L965.5 453.8 L971.0 473.8" fill="none" stroke="#ffffff" stroke-width="3.2" stroke-linejoin="round" stroke-linecap="round"/>
<path d="M907.3 410.1 L1007.4 399.2" fill="none" stroke="#ffffff" stroke-width="3.2" stroke-linejoin="round" stroke-linecap="round"/>
<path d="M908.2 436.5 L1015.6 426.5" fill="none" stroke="#ffffff" stroke-width="3.2" stroke-linejoin="round" stroke-linecap="round"/>
<path d="M880.0 291.8 L883.6 321.0" fill="none" stroke="#ffffff" stroke-width="3.2" stroke-linejoin="round" stroke-linecap="round"/>
<path d="M1034.3 332.9 L1087.0 354.2 L1104.1 382.8 L1111.3 458.3 L1122.7 472.6" fill="none" stroke="#ffffff" stroke-width="3.2" stroke-linejoin="round" stroke-linecap="round"/>
<path d="M1094.2 360.0 L1111.3 351.4" fill="none" stroke="#ffffff" stroke-width="3.2" stroke-linejoin="round" stroke-linecap="round"/>
<path d="M1056.4 338.6 L1060.0 330.0" fill="none" stroke="#ffffff" stroke-width="3.2" stroke-linejoin="round" stroke-linecap="round"/>
<path d="M1094.2 472.6 L1095.6 464.0 L1112.7 461.2 L1122.7 472.6 L1128.4 466.9 L1154.0 464.0" fill="none" stroke="#ffffff" stroke-width="3.2" stroke-linejoin="round" stroke-linecap="round"/>
<path d="M1131.2 283.0 L1131.2 330.0 L1134.0 364.2 L1145.5 368.5" fill="none" stroke="#ffffff" stroke-width="3.2" stroke-linejoin="round" stroke-linecap="round"/>
<path d="M1088.5 349.0 L1105.0 321.6" fill="none" stroke="#ffffff" stroke-width="3.2" stroke-linejoin="round" stroke-linecap="round"/>
<path d="M1245.6 197.0 L1245.6 238.7" fill="none" stroke="#ffffff" stroke-width="3.2" stroke-linejoin="round" stroke-linecap="round"/>
<path d="M1127.0 197.5 L1141.0 201.0 L1138.5 217.0" fill="none" stroke="#ffffff" stroke-width="3.2" stroke-linejoin="round" stroke-linecap="round"/>
<path d="M1102.3 197.0 L1105.0 236.0 L1112.0 250.0 L1107.8 277.6" fill="none" stroke="#ffffff" stroke-width="3.2" stroke-linejoin="round" stroke-linecap="round"/>
<path d="M1050.0 206.0 L1058.0 236.3 L1105.0 236.3" fill="none" stroke="#ffffff" stroke-width="3.2" stroke-linejoin="round" stroke-linecap="round"/>
<path d="M1281.0 197.0 L1289.5 236.3 L1292.0 277.6 L1292.0 310.6 L1308.7 318.9" fill="none" stroke="#ffffff" stroke-width="3.2" stroke-linejoin="round" stroke-linecap="round"/>
<path d="M1292.0 291.0 L1308.0 291.0" fill="none" stroke="#ffffff" stroke-width="3.2" stroke-linejoin="round" stroke-linecap="round"/>
<path d="M1275.7 294.0 L1290.0 312.0 L1308.7 318.9" fill="none" stroke="#ffffff" stroke-width="3.2" stroke-linejoin="round" stroke-linecap="round"/>
<path d="M1284.0 204.6 L1330.0 205.5 L1380.0 204.0" fill="none" stroke="#ffffff" stroke-width="3.2" stroke-linejoin="round" stroke-linecap="round"/>
<path d="M1292.0 254.0 L1352.8 250.0" fill="none" stroke="#ffffff" stroke-width="3.2" stroke-linejoin="round" stroke-linecap="round"/>
<path d="M1131.0 296.8 L1196.0 299.6 L1207.0 313.4 L1207.0 371.0 L1131.0 371.0" fill="none" stroke="#ffffff" stroke-width="3.2" stroke-linejoin="round" stroke-linecap="round"/>
<path d="M1160.0 324.4 L1176.6 324.4" fill="none" stroke="#ffffff" stroke-width="3.2" stroke-linejoin="round" stroke-linecap="round"/>
<path d="M1160.0 324.4 L1157.3 371.0" fill="none" stroke="#ffffff" stroke-width="3.2" stroke-linejoin="round" stroke-linecap="round"/>
<path d="M1072.0 299.6 L1061.0 332.6" fill="none" stroke="#ffffff" stroke-width="3.2" stroke-linejoin="round" stroke-linecap="round"/>
<path d="M1253.7 318.9 L1286.7 371.0" fill="none" stroke="#ffffff" stroke-width="3.2" stroke-linejoin="round" stroke-linecap="round"/>
<path d="M1391.3 268.0 L1394.0 338.0 L1406.5 360.0" fill="none" stroke="#ffffff" stroke-width="3.2" stroke-linejoin="round" stroke-linecap="round"/>
<path d="M353.0 308.0 L545.7 300.0 L720.0 292.7 L1060.0 283.1 L1406.5 268.0" fill="none" stroke="#ffffff" stroke-width="5.5" stroke-linejoin="round" stroke-linecap="round"/>
<path d="M708.0 290.0 L714.5 473.8" fill="none" stroke="#ffffff" stroke-width="5.5" stroke-linejoin="round" stroke-linecap="round"/>
<path d="M1219.3 197.0 L1219.3 473.0" fill="none" stroke="#ffffff" stroke-width="5" stroke-linejoin="round" stroke-linecap="round"/>
<path d="M504.5 334 L509.9 470" stroke="#8ec5f0" stroke-width="1.6" fill="none"/>
<path d="M1388 437 L1406.5 432 M1391 459 L1397 473" stroke="#8ec5f0" stroke-width="1.6" fill="none"/>
<ellipse cx="520" cy="475" rx="8" ry="4" fill="#9cc8f0"/>
<text x="556.7" y="219" font-size="12.5" fill="#5f6f85" font-weight="bold" letter-spacing="3.6" text-anchor="start">LEXINGTON</text>
<text x="347" y="244" font-size="12.5" fill="#5f6f85" font-weight="bold" letter-spacing="3" text-anchor="start">O D</text>
<text x="412" y="346" font-size="12.5" fill="#5f6f85" font-weight="bold" letter-spacing="3.4" text-anchor="start">INE-VIEW</text>
<text x="419" y="360" font-size="12.5" fill="#5f6f85" font-weight="bold" letter-spacing="3.4" text-anchor="start">FARMS</text>
<text x="373.6" y="471" font-size="12.5" fill="#5f6f85" font-weight="bold" letter-spacing="3.25" text-anchor="start">GOLDEN ACRES</text>
<text x="688" y="399" font-size="12.5" fill="#5f6f85" font-weight="bold" letter-spacing="3.3" text-anchor="start">ARLINGTON</text>
<text x="700" y="413" font-size="12.5" fill="#5f6f85" font-weight="bold" letter-spacing="3.3" text-anchor="start">HEIGHTS</text>
<text x="712" y="452" font-size="12.5" fill="#5f6f85" font-weight="bold" letter-spacing="3.6" text-anchor="start">SUNSET</text>
<text x="383" y="218" font-size="12.5" fill="#c8622f" font-weight="normal" letter-spacing="0" text-anchor="start" stroke="#f2f2f2" stroke-width="2.5" paint-order="stroke">Shigs In Pit BBQ &amp; Brew</text>
<text x="353" y="282" font-size="12.5" fill="#b8474a" font-weight="normal" letter-spacing="0" text-anchor="start" stroke="#f2f2f2" stroke-width="2.5" paint-order="stroke">ortheast Indiana</text>
<text x="353" y="296" font-size="12.5" fill="#b8474a" font-weight="normal" letter-spacing="0" text-anchor="start" stroke="#f2f2f2" stroke-width="2.5" paint-order="stroke">ary Emergency...</text>
<text x="353" y="380" font-size="12.5" fill="#555" font-weight="normal" letter-spacing="0" text-anchor="start" stroke="#f2f2f2" stroke-width="2.5" paint-order="stroke">yne</text>
<text x="353" y="393" font-size="12.5" fill="#555" font-weight="normal" letter-spacing="0" text-anchor="start" stroke="#f2f2f2" stroke-width="2.5" paint-order="stroke">oad</text>
<text x="640.7" y="325" font-size="12.5" fill="#3b78d4" font-weight="normal" letter-spacing="0" text-anchor="start" stroke="#f2f2f2" stroke-width="2.5" paint-order="stroke">Blind Shine</text>
<text x="767.4" y="266" font-size="12.5" fill="#555" font-weight="normal" letter-spacing="0" text-anchor="start" stroke="#f2f2f2" stroke-width="2.5" paint-order="stroke">Westport Homes</text>
<text x="767.4" y="279" font-size="12.5" fill="#555" font-weight="normal" letter-spacing="0" text-anchor="start" stroke="#f2f2f2" stroke-width="2.5" paint-order="stroke">- Summer Wind</text>
<text x="878.4" y="261" font-size="12.5" fill="#555" font-weight="normal" letter-spacing="0" text-anchor="start" stroke="#f2f2f2" stroke-width="2.5" paint-order="stroke">Arlington</text>
<text x="878.4" y="274" font-size="12.5" fill="#555" font-weight="normal" letter-spacing="0" text-anchor="start" stroke="#f2f2f2" stroke-width="2.5" paint-order="stroke">Elementary School</text>
<text x="756.4" y="340" font-size="12.5" fill="#555" font-weight="normal" letter-spacing="0" text-anchor="start" stroke="#f2f2f2" stroke-width="2.5" paint-order="stroke">Alliance</text>
<text x="756.4" y="353" font-size="12.5" fill="#555" font-weight="normal" letter-spacing="0" text-anchor="start" stroke="#f2f2f2" stroke-width="2.5" paint-order="stroke">Community Church</text>
<text x="898" y="355" font-size="12.5" fill="#555" font-weight="normal" letter-spacing="0" text-anchor="start" stroke="#f2f2f2" stroke-width="2.5" paint-order="stroke">The Urban Cook</text>
<text x="910.6" y="463.5" font-size="12.5" fill="#3a9a4e" font-weight="normal" letter-spacing="0" text-anchor="start" stroke="#f2f2f2" stroke-width="2.5" paint-order="stroke">Arlington Park Golf Club</text>
<text x="1098" y="350" font-size="12.5" fill="#555" font-weight="normal" letter-spacing="0" text-anchor="start" stroke="#f2f2f2" stroke-width="2.5" paint-order="stroke">Kurt Simerman CPA</text>
<text x="1044" y="399.2" font-size="12.8" fill="#555" font-weight="normal" letter-spacing="0" text-anchor="start" stroke="#f2f2f2" stroke-width="2.5" paint-order="stroke">Jefferson Middle Sch</text>
<text x="1145" y="250" font-size="10.5" fill="#4a7cc0" font-weight="normal" letter-spacing="0" text-anchor="start" stroke="#f2f2f2" stroke-width="2.5" paint-order="stroke">Mowrer Ditch</text>
<text x="1361" y="466" font-size="12.5" fill="#3b78d4" font-weight="normal" letter-spacing="0" text-anchor="start" stroke="#f2f2f2" stroke-width="2.5" paint-order="stroke">Discoun</text>
<text x="558" y="302" font-size="10.3" fill="#555" font-weight="normal" letter-spacing="0" text-anchor="start" stroke="#f2f2f2" stroke-width="2.5" paint-order="stroke" transform="rotate(-2.5 558 302)">St Joe Center Rd</text>
<text x="716.5" y="296" font-size="10.3" fill="#555" font-weight="normal" letter-spacing="0" text-anchor="start" stroke="#f2f2f2" stroke-width="2.5" paint-order="stroke" transform="rotate(-1.5 716.5 296)">St Joe Center Rd</text>
<text x="980.8" y="287" font-size="10.3" fill="#555" font-weight="normal" letter-spacing="0" text-anchor="start" stroke="#f2f2f2" stroke-width="2.5" paint-order="stroke" transform="rotate(-1.5 980.8 287)">St Joe Center Rd</text>
<text x="1143.6" y="302" font-size="9" fill="#555" font-weight="normal" letter-spacing="0" text-anchor="start" stroke="#f2f2f2" stroke-width="2.5" paint-order="stroke" transform="rotate(3 1143.6 302)">Brockport Run</text>
<text x="1145" y="372" font-size="9" fill="#555" font-weight="normal" letter-spacing="0" text-anchor="start" stroke="#f2f2f2" stroke-width="2.5" paint-order="stroke">Bradenton Rd</text>
<text x="1288" y="207.5" font-size="8" fill="#555" font-weight="normal" letter-spacing="0" text-anchor="start" stroke="#f2f2f2" stroke-width="2.5" paint-order="stroke" transform="rotate(3 1288 207.5)">Sea View Cove</text>
<text x="1300.5" y="257" font-size="8" fill="#555" font-weight="normal" letter-spacing="0" text-anchor="start" stroke="#f2f2f2" stroke-width="2.5" paint-order="stroke" transform="rotate(-4 1300.5 257)">Skipjack Cove</text>
<text x="413.6" y="396" font-size="8.5" fill="#555" font-weight="normal" letter-spacing="0" text-anchor="start" stroke="#f2f2f2" stroke-width="2.5" paint-order="stroke">Velmar Dr</text>
<text x="413.6" y="432" font-size="8.5" fill="#555" font-weight="normal" letter-spacing="0" text-anchor="start" stroke="#f2f2f2" stroke-width="2.5" paint-order="stroke">Monte Ave</text>
<text x="803" y="389" font-size="8.5" fill="#555" font-weight="normal" letter-spacing="0" text-anchor="start" stroke="#f2f2f2" stroke-width="2.5" paint-order="stroke">Frontier Ave</text>
<text x="640" y="408" font-size="8" fill="#555" font-weight="normal" letter-spacing="0" text-anchor="start" stroke="#f2f2f2" stroke-width="2.5" paint-order="stroke" transform="rotate(6 640 408)">Newland Pl</text>
<text x="1216.5" y="287" font-size="10.5" fill="#444" font-weight="normal" letter-spacing="0" text-anchor="start" stroke="#f2f2f2" stroke-width="2.5" paint-order="stroke" transform="rotate(90 1216.5 287)">Wheelock Rd</text>
<text x="1127.5" y="286" font-size="8" fill="#555" font-weight="normal" letter-spacing="0" text-anchor="start" stroke="#f2f2f2" stroke-width="2.5" paint-order="stroke" transform="rotate(90 1127.5 286)">Chiswell Run</text>
<text x="519" y="386" font-size="8" fill="#555" font-weight="normal" letter-spacing="0" text-anchor="start" stroke="#f2f2f2" stroke-width="2.5" paint-order="stroke" transform="rotate(90 519 386)">Myanna Ln</text>
<text x="571" y="408" font-size="8" fill="#555" font-weight="normal" letter-spacing="0" text-anchor="start" stroke="#f2f2f2" stroke-width="2.5" paint-order="stroke" transform="rotate(90 571 408)">Keswick Ln</text>
<text x="959.5" y="396" font-size="8" fill="#555" font-weight="normal" letter-spacing="0" text-anchor="start" stroke="#f2f2f2" stroke-width="2.5" paint-order="stroke" transform="rotate(90 959.5 396)">Potomac Dr</text>
<text x="619" y="458" font-size="8" fill="#555" font-weight="normal" letter-spacing="0" text-anchor="start" stroke="#f2f2f2" stroke-width="2.5" paint-order="stroke" transform="rotate(90 619 458)">Harr</text>
<text x="619.5" y="256" font-size="8" fill="#555" font-weight="normal" letter-spacing="0" text-anchor="start" stroke="#f2f2f2" stroke-width="2.5" paint-order="stroke" transform="rotate(90 619.5 256)">Revere Pl</text>
<text x="1380" y="256" font-size="8.5" fill="#555" font-weight="normal" letter-spacing="0" text-anchor="start" stroke="#f2f2f2" stroke-width="2.5" paint-order="stroke"></text>
<text x="689" y="209" font-size="8" fill="#555" font-weight="normal" letter-spacing="0" text-anchor="start" stroke="#f2f2f2" stroke-width="2.5" paint-order="stroke" transform="rotate(90 689 209)">Post Brook Ln</text>
<text x="544" y="198" font-size="8" fill="#555" font-weight="normal" letter-spacing="0" text-anchor="start" stroke="#f2f2f2" stroke-width="2.5" paint-order="stroke" transform="rotate(90 544 198)">Bird</text>
<text x="918" y="199" font-size="8" fill="#555" font-weight="normal" letter-spacing="0" text-anchor="start" stroke="#f2f2f2" stroke-width="2.5" paint-order="stroke" transform="rotate(90 918 199)">Graysford Pl</text>
<text x="942" y="197" font-size="8" fill="#555" font-weight="normal" letter-spacing="0" text-anchor="start" stroke="#f2f2f2" stroke-width="2.5" paint-order="stroke" transform="rotate(90 942 197)">ning Brook Ln</text>
<text x="968" y="199" font-size="8" fill="#555" font-weight="normal" letter-spacing="0" text-anchor="start" stroke="#f2f2f2" stroke-width="2.5" paint-order="stroke" transform="rotate(90 968 199)">Deville Pl</text>
<text x="994" y="228" font-size="8" fill="#555" font-weight="normal" letter-spacing="0" text-anchor="start" stroke="#f2f2f2" stroke-width="2.5" paint-order="stroke" transform="rotate(90 994 228)">Chateau Pl</text>
<text x="1008" y="221" font-size="8" fill="#555" font-weight="normal" letter-spacing="0" text-anchor="start" stroke="#f2f2f2" stroke-width="2.5" paint-order="stroke" transform="rotate(90 1008 221)">Kreiselmeyer Dr</text>
<text x="868" y="199" font-size="8" fill="#555" font-weight="normal" letter-spacing="0" text-anchor="start" stroke="#f2f2f2" stroke-width="2.5" paint-order="stroke" transform="rotate(62 868 199)">Prestwick Run</text>
<text x="603" y="459" font-size="8" fill="#555" font-weight="normal" letter-spacing="0" text-anchor="start" stroke="#f2f2f2" stroke-width="2.5" paint-order="stroke" transform="rotate(-90 603 459)">Williman Ln</text>
<text x="654" y="379" font-size="8" fill="#555" font-weight="normal" letter-spacing="0" text-anchor="start" stroke="#f2f2f2" stroke-width="2.5" paint-order="stroke" transform="rotate(-82 654 379)">Gate Tree Ln</text>
<text x="578" y="336" font-size="8" fill="#555" font-weight="normal" letter-spacing="0" text-anchor="start" stroke="#f2f2f2" stroke-width="2.5" paint-order="stroke" transform="rotate(58 578 336)">Creekwood Trail</text>
<text x="539" y="360" font-size="8" fill="#555" font-weight="normal" letter-spacing="0" text-anchor="start" stroke="#f2f2f2" stroke-width="2.5" paint-order="stroke" transform="rotate(38 539 360)">Dennison Dr</text>
<text x="988" y="300" font-size="8" fill="#555" font-weight="normal" letter-spacing="0" text-anchor="start" stroke="#f2f2f2" stroke-width="2.5" paint-order="stroke" transform="rotate(32 988 300)">Rail Fence Rd</text>
<text x="1252" y="368" font-size="8" fill="#555" font-weight="normal" letter-spacing="0" text-anchor="start" stroke="#f2f2f2" stroke-width="2.5" paint-order="stroke" transform="rotate(-58 1252 368)">ers Creek</text>
<g transform="translate(404 203)"><path d="M0 0 C-2 -5 -8.3 -9 -8.3 -15 A8.3 8.3 0 1 1 8.3 -15 C8.3 -9 2 -5 0 0Z" fill="#f0772e" stroke="#fff" stroke-width="1"/><circle cx="0" cy="-15" r="3.2" fill="#fff"/></g>
<g transform="translate(421.3 325)"><path d="M0 0 C-2 -5 -8.3 -9 -8.3 -15 A8.3 8.3 0 1 1 8.3 -15 C8.3 -9 2 -5 0 0Z" fill="#ea4f5c" stroke="#fff" stroke-width="1"/><circle cx="0" cy="-15" r="3.2" fill="#fff"/></g>
<g transform="translate(755 276)"><path d="M0 0 C-2 -5 -8.3 -9 -8.3 -15 A8.3 8.3 0 1 1 8.3 -15 C8.3 -9 2 -5 0 0Z" fill="#6c8aa0" stroke="#fff" stroke-width="1"/><circle cx="0" cy="-15" r="3.2" fill="#fff"/></g>
<g transform="translate(898.7 302)"><path d="M0 0 C-2 -5 -8.3 -9 -8.3 -15 A8.3 8.3 0 1 1 8.3 -15 C8.3 -9 2 -5 0 0Z" fill="#6c8aa0" stroke="#fff" stroke-width="1"/><path d="M-5 -14.5 L0 -17 L5 -14.5 L0 -12Z M-3 -13.5 V-11 Q0 -9.5 3 -11 V-13.5" fill="#fff"/></g>
<g transform="translate(716 331)"><path d="M0 0 C-2 -5 -8.3 -9 -8.3 -15 A8.3 8.3 0 1 1 8.3 -15 C8.3 -9 2 -5 0 0Z" fill="#2f80e4" stroke="#fff" stroke-width="1"/><rect x="-3.5" y="-15" width="7" height="5.5" rx="1" fill="#fff"/></g>
<g transform="translate(744 352)"><path d="M0 0 C-2 -5 -8.3 -9 -8.3 -15 A8.3 8.3 0 1 1 8.3 -15 C8.3 -9 2 -5 0 0Z" fill="#6c8aa0" stroke="#fff" stroke-width="1"/><path d="M0 -19 V-8 M-3.5 -15.5 H3.5" stroke="#fff" stroke-width="1.8"/></g>
<g transform="translate(1000 361.9)"><path d="M0 0 C-2 -5 -8.3 -9 -8.3 -15 A8.3 8.3 0 1 1 8.3 -15 C8.3 -9 2 -5 0 0Z" fill="#6c8aa0" stroke="#fff" stroke-width="1"/><circle cx="0" cy="-15" r="3.2" fill="#fff"/></g>
<g transform="translate(1087 357.8)"><path d="M0 0 C-2 -5 -8.3 -9 -8.3 -15 A8.3 8.3 0 1 1 8.3 -15 C8.3 -9 2 -5 0 0Z" fill="#6c8aa0" stroke="#fff" stroke-width="1"/><circle cx="0" cy="-15" r="3.2" fill="#fff"/></g>
<g transform="translate(1250.7 265)"><path d="M0 0 C-2 -5 -8.3 -9 -8.3 -15 A8.3 8.3 0 1 1 8.3 -15 C8.3 -9 2 -5 0 0Z" fill="#e8525d" stroke="#fff" stroke-width="1"/><path d="M-4 -13 V-18 L0 -20.5 L4 -18 V-13Z" fill="#fff"/><path d="M0 -18.5 V-14 M-2.2 -16.2 H2.2" stroke="#e8525d" stroke-width="1.2"/></g>
<g transform="translate(1057.8 470.5)"><path d="M0 0 C-2 -5 -8.3 -9 -8.3 -15 A8.3 8.3 0 1 1 8.3 -15 C8.3 -9 2 -5 0 0Z" fill="#3aa04f" stroke="#fff" stroke-width="1"/><circle cx="0" cy="-15" r="3.2" fill="#fff"/></g>
<g transform="translate(1379 386)"><path d="M0 0 C-2 -5 -8.3 -9 -8.3 -15 A8.3 8.3 0 1 1 8.3 -15 C8.3 -9 2 -5 0 0Z" fill="#2f80e4" stroke="#fff" stroke-width="1"/><circle cx="0" cy="-15" r="3.2" fill="#fff"/></g>
<circle cx="386" cy="378" r="7.5" fill="#6c8aa0"/><circle cx="386" cy="378" r="3" fill="#fff"/>
</svg>

<div class="a" style="left:19.5px;top:19px;width:276.5px;height:36px;border-radius:18px;background:#fff;box-shadow:0 2px 6px rgba(0,0,0,.22)"></div>
<svg class="a" style="left:33.5px;top:28px" width="17" height="17" viewBox="0 0 17 17" fill="none" stroke="#4e5866" stroke-width="1.9"><circle cx="7" cy="7" r="5.3"/><path d="M11 11 L15 15" stroke-linecap="round"/></svg>
<div class="t" style="left:56px;top:30px;font-size:12.8px;color:#8c96a2">Search places, members or job sites</div>
<div class="a" style="left:19px;top:133px;width:37px;height:37px;border-radius:6px;background:#fff;box-shadow:0 1px 4px rgba(0,0,0,.2)"></div>
<svg class="a" style="left:28px;top:142px" width="19" height="19" viewBox="0 0 19 19" fill="none" stroke="#4e5866" stroke-width="1.7"><circle cx="6.5" cy="6.5" r="3.2"/><circle cx="12.5" cy="6.8" r="3.2"/><path d="M3 14 C3 10.5 9.5 9.5 9.5 12.5 C9.5 9.5 16 10.5 16 14 C16 17 3 17 3 14Z"/></svg>
<div class="a" style="left:19px;top:185px;width:37px;height:73px;border-radius:6px;background:#fff;box-shadow:0 1px 4px rgba(0,0,0,.2)"></div>
<div class="a" style="left:26px;top:221px;width:23px;height:1px;background:#e6e6e6"></div>
<svg class="a" style="left:27px;top:193px" width="21" height="21" viewBox="0 0 21 21" stroke="#4e5866" stroke-width="1.8"><path d="M10.5 3 V18 M3 10.5 H18"/></svg>
<svg class="a" style="left:27px;top:229px" width="21" height="21" viewBox="0 0 21 21" stroke="#4e5866" stroke-width="1.8"><path d="M3 10.5 H18"/></svg>
<div class="a" style="left:997px;top:18px;width:37.5px;height:37.5px;border-radius:19px;background:#2a97f3;box-shadow:0 2px 6px rgba(0,0,0,.3)"></div>
<svg class="a" style="left:1006px;top:27px" width="20" height="20" viewBox="0 0 20 20" stroke="#fff" stroke-width="2.2"><path d="M10 3 V17 M3 10 H17"/></svg>
<div class="a" style="left:812.5px;top:175.5px;width:221px;height:82.5px;border-radius:4px;background:#fff;box-shadow:0 1px 5px rgba(0,0,0,.2)"></div>
<div class="t" style="left:827.2px;top:188.5px;font-size:11.3px;color:#5b6470">Active workers</div>
<div class="t" style="left:935.5px;top:188.5px;font-size:11.3px;color:#5b6470">Active job sites</div>
<div class="t" style="left:826.2px;top:202px;font-size:22.5px;color:#1c1c1c">8</div>
<div class="t" style="left:934.5px;top:202px;font-size:22.5px;color:#1c1c1c">5</div>
<div class="t" style="left:827.2px;top:232px;font-size:11.5px;color:#2a9ded">View</div>
<div class="t" style="left:935.5px;top:232px;font-size:11.5px;color:#2a9ded">View</div>
<svg class="a" style="left:855.5px;top:234px" width="7" height="10"><path d="M1.5 1 L5.3 5 L1.5 9" fill="none" stroke="#2a9ded" stroke-width="1.3"/></svg>
<svg class="a" style="left:963.5px;top:234px" width="7" height="10"><path d="M1.5 1 L5.3 5 L1.5 9" fill="none" stroke="#2a9ded" stroke-width="1.3"/></svg>
<!--/MAPSVG-->
  </div>
  <!-- STATS -->
  <div class="card" style="left:354px;top:502px;width:1052px;height:103px"></div>
  <div class="a" style="left:618.5px;top:512px;width:1px;height:82px;background:#e6e6e6"></div>
  <div class="a" style="left:881.5px;top:512px;width:1px;height:82px;background:#e6e6e6"></div>
  <div class="a" style="left:1144px;top:512px;width:1px;height:82px;background:#e6e6e6"></div>
<div class="lbl" style="left:372.7px;top:518px;letter-spacing:-0.45px">SPENT THIS WEEK</div>
<div class="keb" style="left:595.5px;top:515.5px"><i style="top:0"></i><i style="top:5.5px"></i><i style="top:11px"></i></div>
<div class="big" style="left:372.2px;top:539px">$1,852.50</div>
<svg class="a" style="left:372.7px;top:577.5px" width="11" height="9"><path d="M0.5 8.5 L5.5 1 L10.5 8.5Z" fill="#2bb35b"/></svg><div class="t" style="left:387.2px;top:576px;font-size:12.3px;color:#2bb35b">$211.00</div>
<div class="lbl" style="left:637.7px;top:518px;letter-spacing:-0.45px">WORKED TODAY</div>
<div class="keb" style="left:858px;top:515.5px"><i style="top:0"></i><i style="top:5.5px"></i><i style="top:11px"></i></div>
<div class="big" style="left:637.2px;top:539px">80:22:23</div>
<svg class="a" style="left:637.7px;top:578.5px" width="11" height="9"><path d="M0.5 1 L5.5 8 L10.5 1Z" fill="#e5484d"/></svg><div class="t" style="left:652.2px;top:576px;font-size:12.3px;color:#e5484d">1:52:02</div>
<div class="lbl" style="left:900.3px;top:518px;letter-spacing:-0.45px">WORKED THIS WEEK</div>
<div class="keb" style="left:1121px;top:515.5px"><i style="top:0"></i><i style="top:5.5px"></i><i style="top:11px"></i></div>
<div class="big" style="left:899.8px;top:539px">131:42:11</div>
<svg class="a" style="left:900.3px;top:577.5px" width="11" height="9"><path d="M0.5 8.5 L5.5 1 L10.5 8.5Z" fill="#2bb35b"/></svg><div class="t" style="left:914.8px;top:576px;font-size:12.3px;color:#2bb35b">1:22:02</div>
<div class="lbl" style="left:1162.5px;top:518px;letter-spacing:-0.45px">PROJECTS WORKED</div>
<div class="keb" style="left:1382px;top:515.5px"><i style="top:0"></i><i style="top:5.5px"></i><i style="top:11px"></i></div>
<div class="big" style="left:1162.0px;top:539px">2</div>
<div class="a" style="left:1162.5px;top:582px;width:11px;height:2px;background:#5b6470"></div>
<svg class="a" style="left:0;top:0" width="1477" height="1017" viewBox="0 0 1477 1017">
<defs><linearGradient id="gp" x1="0" y1="0" x2="0" y2="1"><stop offset="0" stop-color="#7b3fe4" stop-opacity=".35"/><stop offset="1" stop-color="#7b3fe4" stop-opacity="0"/></linearGradient><linearGradient id="gb" x1="0" y1="0" x2="0" y2="1"><stop offset="0" stop-color="#2aa0ee" stop-opacity=".3"/><stop offset="1" stop-color="#2aa0ee" stop-opacity="0"/></linearGradient></defs>
<path d="M532.1 589.3 L547.4 586.4 L559.1 576.9 L573 581.7 L588.4 581.7 L598.6 576.2 L598.6 592 L532.1 592 Z" fill="url(#gp)"/><path d="M532.1 589.3 L547.4 586.4 L559.1 576.9 L573 581.7 L588.4 581.7 L598.6 576.2" fill="none" stroke="#6a2fe0" stroke-width="2" stroke-linejoin="round"/>
<path d="M796.8 583.5 L812.5 581.3 L824.6 576.9 L838.1 576.9 L853.8 586.4 L863 580.9 L863 592 L796.8 592 Z" fill="url(#gb)"/><path d="M796.8 583.5 L812.5 581.3 L824.6 576.9 L838.1 576.9 L853.8 586.4 L863 580.9" fill="none" stroke="#2aa0ee" stroke-width="2" stroke-linejoin="round"/>
<path d="M1060.1 583.5 L1074.8 586.4 L1087.5 576.9 L1102.2 581.7 L1116.8 581.7 L1126 589.3 L1126 592 L1060.1 592 Z" fill="url(#gp)"/><path d="M1060.1 583.5 L1074.8 586.4 L1087.5 576.9 L1102.2 581.7 L1116.8 581.7 L1126 589.3" fill="none" stroke="#6a2fe0" stroke-width="2" stroke-linejoin="round"/>
<path d="M1321.6 582.8 L1336.2 579.8 L1348.2 586.4 L1362.9 579.8 L1376.4 583.5 L1386.6 582 L1386.6 592 L1321.6 592 Z" fill="url(#gb)"/><path d="M1321.6 582.8 L1336.2 579.8 L1348.2 586.4 L1362.9 579.8 L1376.4 583.5 L1386.6 582" fill="none" stroke="#2aa0ee" stroke-width="2" stroke-linejoin="round"/>
</svg>

  <!-- MEMBERS -->
  <div class="card" style="left:354px;top:632.5px;width:512px;height:400px"></div>
  <div class="lbl" style="left:373.2px;top:648px;letter-spacing:-0.3px">MEMBERS</div>
  <div class="keb" style="left:842px;top:646px"><i style="top:0"></i><i style="top:5.5px"></i><i style="top:11px"></i></div>
  <div class="t" style="left:373px;top:680.5px;font-size:12.3px;color:#2c3440;-webkit-text-stroke:0.2px #2c3440">Member info</div>
  <div class="t" style="left:600.7px;top:680.5px;font-size:12.3px;color:#2c3440;-webkit-text-stroke:0.2px #2c3440">Today</div>
  <div class="t" style="left:711.6px;top:680.5px;font-size:12.3px;color:#2c3440;-webkit-text-stroke:0.2px #2c3440">This week</div>
  <div class="a" style="left:373px;top:707px;width:472px;height:2px;background:#e6e8ea"></div>
  <div class="a" style="left:373px;top:777px;width:472px;height:1px;background:#e6e8ea"></div>
  <div class="a" style="left:373px;top:846px;width:472px;height:1px;background:#e6e8ea"></div>
  <div class="a" style="left:373px;top:915px;width:472px;height:1px;background:#e6e8ea"></div>
<div class="t" style="left:430.9px;top:720.7px;font-size:12.2px;color:#222;letter-spacing:-0.1px;-webkit-text-stroke:0.2px #222">Adrian Goia</div>
<div class="t" style="left:430.9px;top:737.4px;font-size:12.2px;color:#333a44;letter-spacing:-0.25px">Logistics</div>
<div class="t" style="left:430.9px;top:753.0px;font-size:12.2px;color:#a2a9b3;letter-spacing:-0.35px">No task</div>
<div class="t" style="left:605.3px;top:736.0px;font-size:12.2px;color:#222">5:42</div>
<div class="t" style="left:712.7px;top:736.0px;font-size:12.2px;color:#222">12:33</div>
<div class="a" style="left:762.7px;top:733.2px;width:5.5px;height:18.5px;background:#2c9bf0"></div><div class="a" style="left:771.0px;top:746.3px;width:5.5px;height:5.4px;background:#2c9bf0"></div><div class="a" style="left:779.4px;top:739.9px;width:5.5px;height:11.8px;background:#2c9bf0"></div><div class="a" style="left:787.7px;top:749.9px;width:5.5px;height:1.8px;background:#2c9bf0"></div><div class="a" style="left:796.0px;top:737.2px;width:5.5px;height:14.5px;background:#2c9bf0"></div><div class="a" style="left:804.4px;top:750.5px;width:5.5px;height:1.2px;background:#2c9bf0"></div><div class="a" style="left:812.7px;top:750.5px;width:5.5px;height:1.2px;background:#2c9bf0"></div>
<svg class="a" style="left:373.3px;top:719.4000000000001px" width="46.6" height="46.6" viewBox="0 0 46 46"><use href="#av-adrian"/></svg>
<div class="a" style="left:404.7px;top:751.7px;width:15px;height:15px;border-radius:8px;background:#22c55e;border:2px solid #fff"></div>
<div class="t" style="left:430.9px;top:789.6px;font-size:12.2px;color:#222;letter-spacing:-0.1px;-webkit-text-stroke:0.2px #222">Carlos Garcia</div>
<div class="t" style="left:430.9px;top:806.3px;font-size:12.2px;color:#333a44;letter-spacing:-0.25px">Logistics</div>
<div class="t" style="left:430.9px;top:821.9px;font-size:12.2px;color:#a2a9b3;letter-spacing:-0.35px">Construction site supplies</div>
<div class="t" style="left:605.3px;top:804.9px;font-size:12.2px;color:#222">6:21</div>
<div class="t" style="left:712.7px;top:804.9px;font-size:12.2px;color:#222">23:14</div>
<div class="a" style="left:762.7px;top:806.3px;width:5.5px;height:14.3px;background:#2c9bf0"></div><div class="a" style="left:771.0px;top:815.3px;width:5.5px;height:5.3px;background:#2c9bf0"></div><div class="a" style="left:779.4px;top:815.3px;width:5.5px;height:5.3px;background:#2c9bf0"></div><div class="a" style="left:787.7px;top:802.6px;width:5.5px;height:18px;background:#2c9bf0"></div><div class="a" style="left:796.0px;top:819.4px;width:5.5px;height:1.2px;background:#2c9bf0"></div><div class="a" style="left:804.4px;top:819.4px;width:5.5px;height:1.2px;background:#2c9bf0"></div><div class="a" style="left:812.7px;top:819.4px;width:5.5px;height:1.2px;background:#2c9bf0"></div>
<svg class="a" style="left:373.3px;top:788.3000000000001px" width="46.6" height="46.6" viewBox="0 0 46 46"><use href="#av-carlos"/></svg>
<div class="a" style="left:404.7px;top:820.6px;width:15px;height:15px;border-radius:8px;background:#22c55e;border:2px solid #fff"></div>
<div class="t" style="left:430.9px;top:859.0px;font-size:12.2px;color:#222;letter-spacing:-0.1px;-webkit-text-stroke:0.2px #222">Jennifer Lang</div>
<div class="t" style="left:430.9px;top:875.7px;font-size:12.2px;color:#333a44;letter-spacing:-0.25px">Deliveries</div>
<div class="t" style="left:430.9px;top:891.3px;font-size:12.2px;color:#a2a9b3;letter-spacing:-0.35px">Deliver custom parts</div>
<div class="t" style="left:605.3px;top:874.3px;font-size:12.2px;color:#222">5:51</div>
<div class="t" style="left:712.7px;top:874.3px;font-size:12.2px;color:#222">21:24</div>
<div class="a" style="left:762.7px;top:875.0px;width:5.5px;height:15px;background:#2c9bf0"></div><div class="a" style="left:771.0px;top:884.2px;width:5.5px;height:5.8px;background:#2c9bf0"></div><div class="a" style="left:779.4px;top:875.0px;width:5.5px;height:15px;background:#2c9bf0"></div><div class="a" style="left:787.7px;top:871.2px;width:5.5px;height:18.8px;background:#2c9bf0"></div><div class="a" style="left:796.0px;top:880.5px;width:5.5px;height:9.5px;background:#2c9bf0"></div><div class="a" style="left:804.4px;top:888.8px;width:5.5px;height:1.2px;background:#2c9bf0"></div><div class="a" style="left:812.7px;top:888.8px;width:5.5px;height:1.2px;background:#2c9bf0"></div>
<svg class="a" style="left:373.3px;top:857.7px" width="46.6" height="46.6" viewBox="0 0 46 46"><use href="#av-jen"/></svg>
<div class="a" style="left:404.7px;top:890.0px;width:15px;height:15px;border-radius:8px;background:#22c55e;border:2px solid #fff"></div>

  <!-- THIS WEEK -->
  <div class="card" style="left:894.7px;top:632.9px;width:511px;height:247px"></div>
  <div class="card" style="left:894.7px;top:908.5px;width:511px;height:200px"></div>
  <div class="lbl" style="left:912.6px;top:648px;letter-spacing:-0.35px">THIS WEEK</div>
  <div class="keb" style="left:1382.5px;top:646px"><i style="top:0"></i><i style="top:5.5px"></i><i style="top:11px"></i></div>
<div class="t" style="left:909.2px;width:80px;text-align:center;top:702px;font-size:11.3px;color:#2a2f36">5:12</div>
<div class="t" style="left:909.2px;width:80px;text-align:center;top:822.5px;font-size:11.3px;color:#2a2f36">Mon</div>
<div class="a" style="left:943.7px;top:760.3px;width:11px;height:47.2px;background:#2c9bf0"></div>
<div class="t" style="left:975.6500000000001px;width:80px;text-align:center;top:702px;font-size:11.3px;color:#2a2f36">8:05</div>
<div class="t" style="left:975.6500000000001px;width:80px;text-align:center;top:822.5px;font-size:11.3px;color:#2a2f36">Tue</div>
<div class="a" style="left:1010.2px;top:725.5px;width:11px;height:82.0px;background:#2c9bf0"></div>
<div class="t" style="left:1042.1000000000001px;width:80px;text-align:center;top:702px;font-size:11.3px;color:#2a2f36">6:30</div>
<div class="t" style="left:1042.1000000000001px;width:80px;text-align:center;top:822.5px;font-size:11.3px;color:#2a2f36">Wed</div>
<div class="a" style="left:1076.6px;top:742.7px;width:11px;height:64.8px;background:#2c9bf0"></div>
<div class="t" style="left:1108.5500000000002px;width:80px;text-align:center;top:702px;font-size:11.3px;color:#2a2f36">1:45</div>
<div class="t" style="left:1108.5500000000002px;width:80px;text-align:center;top:822.5px;font-size:11.3px;color:#2a2f36">Thu</div>
<div class="a" style="left:1143.1px;top:794.4px;width:11px;height:13.1px;background:#2c9bf0"></div>
<div class="t" style="left:1175.0px;width:80px;text-align:center;top:702px;font-size:11.3px;color:#2a2f36">8:15</div>
<div class="t" style="left:1175.0px;width:80px;text-align:center;top:822.5px;font-size:11.3px;color:#2a2f36">Fri</div>
<div class="a" style="left:1209.5px;top:725.5px;width:11px;height:82.0px;background:#2c9bf0"></div>
<div class="t" style="left:1241.45px;width:80px;text-align:center;top:702px;font-size:11.3px;color:#2a2f36">0:00</div>
<div class="t" style="left:1241.45px;width:80px;text-align:center;top:822.5px;font-size:11.3px;color:#2a2f36">Sat</div>
<div class="a" style="left:1276.0px;top:808px;width:11px;height:1.3px;background:#2c9bf0"></div>
<div class="t" style="left:1307.9px;width:80px;text-align:center;top:702px;font-size:11.3px;color:#2a2f36">0:00</div>
<div class="t" style="left:1307.9px;width:80px;text-align:center;top:822.5px;font-size:11.3px;color:#2a2f36">Sun</div>
<div class="a" style="left:1342.4px;top:808px;width:11px;height:1.3px;background:#2c9bf0"></div>
<div class="t" style="left:1117px;top:853.5px;font-size:11.6px;color:#2a9ded">View report</div>
<svg class="a" style="left:1180px;top:854px" width="7" height="10"><path d="M1.5 1 L5.3 5 L1.5 9" fill="none" stroke="#2a9ded" stroke-width="1.3"/></svg>
</div><div id="winborder" style="position:absolute;left:0;top:0;right:0;bottom:0;border:1px solid #fff;border-radius:32px"></div></div>
</body></html>
